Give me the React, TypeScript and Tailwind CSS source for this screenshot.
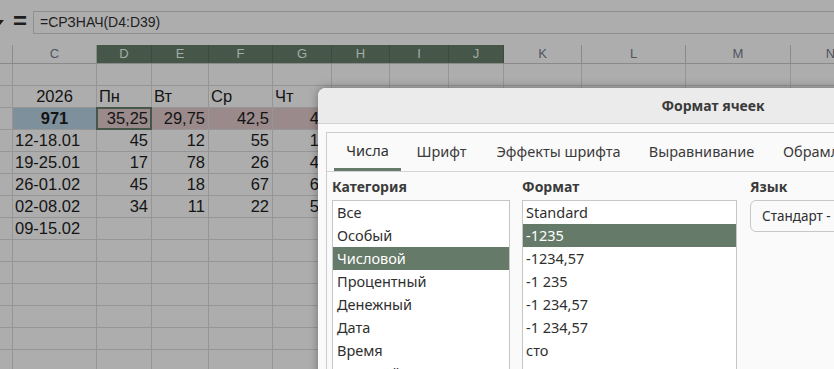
import React from 'react';

type Col = { key: string; w: string; green?: boolean };

const cols: Col[] = [
  { key: '', w: 'w-[13px]' },
  { key: 'C', w: 'w-[84px]' },
  { key: 'D', w: 'w-[55px]', green: true },
  { key: 'E', w: 'w-[57px]', green: true },
  { key: 'F', w: 'w-[64px]', green: true },
  { key: 'G', w: 'w-[59px]', green: true },
  { key: 'H', w: 'w-[58px]', green: true },
  { key: 'I', w: 'w-[59px]', green: true },
  { key: 'J', w: 'w-[55px]', green: true },
  { key: 'K', w: 'w-[78px]' },
  { key: 'L', w: 'w-[104px]' },
  { key: 'M', w: 'w-[105px]' },
  { key: 'N', w: 'w-[80px]' },
];

type Cell = { text?: string; align?: 'left' | 'right' | 'center'; bold?: boolean; bg?: string; sel?: boolean };

const dataRows: Record<number, Cell>[] = [
  {},
  {
    1: { text: '2026', align: 'center' },
    2: { text: 'Пн', align: 'left' },
    3: { text: 'Вт', align: 'left' },
    4: { text: 'Ср', align: 'left' },
    5: { text: 'Чт', align: 'left' },
  },
  {
    1: { text: '971', align: 'center', bold: true, bg: 'bg-[#7f909d]' },
    2: { text: '35,25', align: 'right', bg: 'bg-[#9a8a8b]', sel: true },
    3: { text: '29,75', align: 'right', bg: 'bg-[#9a8a8b]' },
    4: { text: '42,5', align: 'right', bg: 'bg-[#9a8a8b]' },
    5: { text: '44', align: 'right', bg: 'bg-[#9a8a8b]' },
    6: { bg: 'bg-[#9a8a8b]' },
    7: { bg: 'bg-[#9a8a8b]' },
    8: { bg: 'bg-[#9a8a8b]' },
  },
  { 1: { text: '12-18.01' }, 2: { text: '45', align: 'right' }, 3: { text: '12', align: 'right' }, 4: { text: '55', align: 'right' }, 5: { text: '14', align: 'right' } },
  { 1: { text: '19-25.01' }, 2: { text: '17', align: 'right' }, 3: { text: '78', align: 'right' }, 4: { text: '26', align: 'right' }, 5: { text: '45', align: 'right' } },
  { 1: { text: '26-01.02' }, 2: { text: '45', align: 'right' }, 3: { text: '18', align: 'right' }, 4: { text: '67', align: 'right' }, 5: { text: '63', align: 'right' } },
  { 1: { text: '02-08.02' }, 2: { text: '34', align: 'right' }, 3: { text: '11', align: 'right' }, 4: { text: '22', align: 'right' }, 5: { text: '54', align: 'right' } },
  { 1: { text: '09-15.02' } },
  {},
  {},
  {},
  {},
  {},
  {},
];

const categories = ['Все', 'Особый', 'Числовой', 'Процентный', 'Денежный', 'Дата', 'Время', 'Научный', 'Дробный'];
const formats = ['Standard', '-1235', '-1234,57', '-1 235', '-1 234,57', '-1 234,57', 'сто', '-1 234,57'];

function Sheet() {
  return (
    <div className="flex flex-col font-['Liberation_Sans',Arial,sans-serif] text-[#141414]">
      {/* formula bar */}
      <div className="h-[11px]" />
      <div className="flex h-[23px] items-center">
        <div className="w-[13px] shrink-0 flex items-center">
          <svg width="8" height="5" viewBox="0 0 8 5" className="-ml-[4px]">
            <path d="M0 0h8L4 5z" fill="#1e1e1e" />
          </svg>
        </div>
        <div className="w-[20px] shrink-0 text-[24px] leading-none font-bold text-[#1e1e1e] -mt-[3px]">=</div>
        <div className="flex-1 h-[23px] border border-[#8f8f8f] border-r-0 flex items-center pl-[6px] text-[14px] text-[#1e1e1e]">
          =СРЗНАЧ(D4:D39)
        </div>
      </div>
      <div className="h-[11px]" />

      {/* column headers */}
      <div className="flex h-[19px] border-b border-[#8a8a8a]">
        {cols.map((c, i) => (
          <div
            key={i}
            className={`${c.w} shrink-0 h-full flex items-center justify-center text-[13px] ${
              c.green ? 'bg-[#46574a] text-[#a3aea5] border-r border-[#3c4a3f]' : 'text-[#4d5660] border-r border-[#8a8a8a]'
            }`}
          >
            {c.key}
          </div>
        ))}
      </div>

      {/* rows */}
      {dataRows.map((row, r) => (
        <div key={r} className="flex h-[22px] border-b border-[#969696]">
          {cols.map((c, i) => {
            const cell = row[i];
            const align =
              cell?.align === 'right' ? 'justify-end pr-[3px]' : cell?.align === 'center' ? 'justify-center' : 'justify-start pl-[2px]';
            return (
              <div
                key={i}
                className={`${c.w} shrink-0 h-full relative flex items-center border-r border-[#969696] text-[16.5px] leading-none ${align} ${
                  cell?.bg ?? ''
                } ${cell?.bold ? 'font-bold' : ''}`}
              >
                {cell?.text}
                {cell?.sel && <div className="absolute -left-[1px] -top-[1px] -right-[1px] -bottom-[1px] border-2 border-[#46574a]" />}
              </div>
            );
          })}
        </div>
      ))}
    </div>
  );
}

function Dialog() {
  return (
    <div className="absolute left-[318px] top-[88px] w-[790px] h-[320px] rounded-t-[8px] bg-[#fafafa] shadow-[0_0_10px_rgba(0,0,0,0.35)] overflow-hidden font-['Noto_Sans','Open_Sans',sans-serif] text-[#3a3a3a]">
      <div className="h-[36px] bg-[#ebebeb] border-b border-[#d2d2d2] flex items-center justify-center text-[14px] font-bold text-[#3a3a3a]">
        Формат ячеек
      </div>
      <div className="pl-[8px] pt-[8px]">
        <div className="border border-[#cdcdcd] border-r-0 h-[300px]">
          <div className="flex h-[39px] border-b border-[#d4d4d4] text-[14.5px]">
            <div className="w-[7px]" />
            <div className="w-[67px] flex flex-col">
              <div className="flex-1 flex items-center justify-center text-[#2f2f2f]">Числа</div>
              <div className="h-[3px] bg-[#657a68]" />
            </div>
            <div className="w-[81px] flex items-center justify-center">Шрифт</div>
            <div className="w-[153px] flex items-center justify-center">Эффекты шрифта</div>
            <div className="w-[133px] flex items-center justify-center">Выравнивание</div>
            <div className="pl-[15px] flex items-center whitespace-nowrap">Обрамление</div>
          </div>
          <div className="flex pl-[5px] pt-[4px]">
            <div className="w-[178px] shrink-0">
              <div className="h-[22px] text-[14px] font-bold leading-[22px]">Категория</div>
              <div className="mt-[2px] h-[200px] border border-[#c6c6c6] bg-white">
                {categories.map((c, i) => (
                  <div
                    key={c}
                    className={`h-[23px] leading-[23px] px-[4px] text-[14.5px] ${i === 2 ? 'bg-[#657a68] text-white' : 'text-[#2f2f2f]'}`}
                  >
                    {c}
                  </div>
                ))}
              </div>
            </div>
            <div className="w-[215px] shrink-0 ml-[12px]">
              <div className="h-[22px] text-[14px] font-bold leading-[22px]">Формат</div>
              <div className="mt-[2px] h-[200px] border border-[#c6c6c6] bg-white">
                {formats.map((f, i) => (
                  <div
                    key={i}
                    className={`h-[23px] leading-[23px] px-[3px] text-[14.5px] ${i === 1 ? 'bg-[#657a68] text-white' : 'text-[#2f2f2f]'}`}
                  >
                    {f}
                  </div>
                ))}
              </div>
            </div>
            <div className="w-[200px] shrink-0 ml-[13px]">
              <div className="h-[22px] text-[14px] font-bold leading-[22px]">Язык</div>
              <div className="mt-[2px] h-[32px] rounded-[6px] border border-[#c8c8c8] bg-[#fafafa] flex items-center pl-[11px] text-[13.5px] whitespace-nowrap text-[#2f2f2f]">
                Стандарт - Русский
              </div>
            </div>
          </div>
        </div>
      </div>
    </div>
  );
}

export default function App() {
  return (
    <div className="relative w-[834px] h-[369px] overflow-hidden bg-[#adadad]">
      <Sheet />
      <Dialog />
    </div>
  );
}
